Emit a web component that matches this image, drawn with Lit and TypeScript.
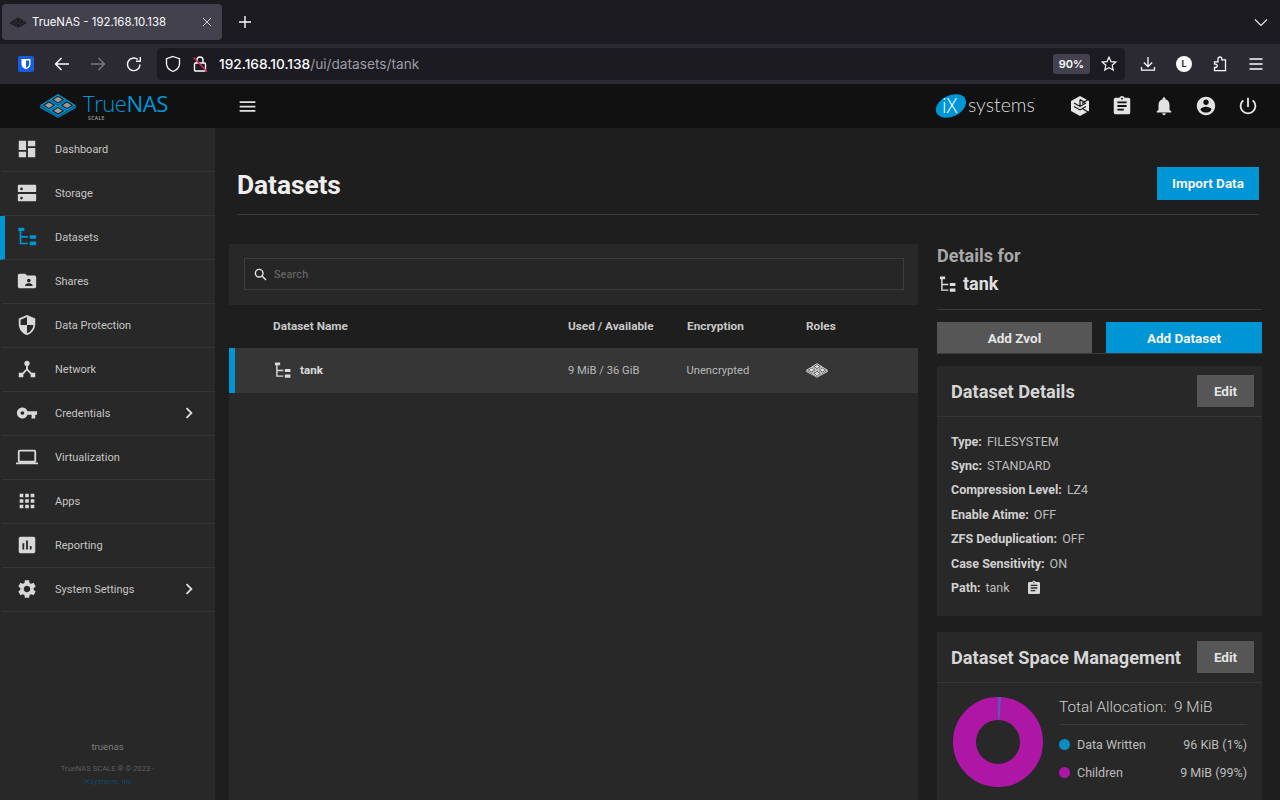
import { LitElement, css, html, svg } from "lit";
import { customElement } from "lit/decorators.js";

const icon = (d: string, size = 22) => html`<svg class="ic" width=${size} height=${size} viewBox="0 0 24 24" fill="currentColor"><path fill-rule="evenodd" d=${d}></path></svg>`;

const P = {
  dashboard: "M3 13h8V3H3v10zm0 8h8v-6H3v6zm10 0h8V11h-8v10zm0-18v6h8V3h-8z",
  storage: "M3 3h18a1 1 0 0 1 1 1v6a1 1 0 0 1-1 1H3a1 1 0 0 1-1-1V4a1 1 0 0 1 1-1zm3 3a1.5 1.5 0 1 0 0 3 1.5 1.5 0 0 0 0-3zM3 13h18a1 1 0 0 1 1 1v6a1 1 0 0 1-1 1H3a1 1 0 0 1-1-1v-6a1 1 0 0 1 1-1zm3 3a1.5 1.5 0 1 0 0 3 1.5 1.5 0 0 0 0-3z",
  shares: "M20 6h-8l-2-2H4c-1.1 0-1.99.9-1.99 2L2 18c0 1.1.9 2 2 2h16c1.1 0 2-.9 2-2V8c0-1.1-.9-2-2-2zm-6 3.5c1.1 0 2 .9 2 2s-.9 2-2 2-2-.9-2-2 .9-2 2-2zm4 8h-8v-1c0-1.33 2.67-2 4-2s4 .67 4 2v1z",
  shield: "M12 1L3 5v6c0 5.55 3.84 10.74 9 12 5.16-1.26 9-6.45 9-12V5l-9-4zm0 10.99h7c-.53 4.12-3.28 7.79-7 8.94V12H5V6.3l7-3.11v8.8z",
  network: "M17 16l-4-4V8.82C14.16 8.4 15 7.3 15 6c0-1.66-1.34-3-3-3S9 4.34 9 6c0 1.3.84 2.4 2 2.82V12l-4 4H3v5h5v-3.05l4-4.2 4 4.2V21h5v-5h-4z",
  key: "M12.65 10C11.83 7.67 9.61 6 7 6c-3.31 0-6 2.69-6 6s2.69 6 6 6c2.61 0 4.83-1.67 5.65-4H17v4h4v-4h2v-4H12.65zM7 14c-1.1 0-2-.9-2-2s.9-2 2-2 2 .9 2 2-.9 2-2 2z",
  laptop: "M20 18c1.1 0 1.99-.9 1.99-2L22 6c0-1.1-.9-2-2-2H4c-1.1 0-2 .9-2 2v10c0 1.1.9 2 2 2H0v2h24v-2h-4zM4 6h16v10H4V6z",
  apps: "M4 8h4V4H4v4zm6 12h4v-4h-4v4zm-6 0h4v-4H4v4zm0-6h4v-4H4v4zm6 0h4v-4h-4v4zm6-10v4h4V4h-4zm-6 4h4V4h-4v4zm6 6h4v-4h-4v4zm0 6h4v-4h-4v4z",
  report: "M19 3H5c-1.1 0-2 .9-2 2v14c0 1.1.9 2 2 2h14c1.1 0 2-.9 2-2V5c0-1.1-.9-2-2-2zM9 17H7v-7h2v7zm4 0h-2V7h2v10zm4 0h-2v-4h2v4z",
  gear: "M19.14 12.94c.04-.3.06-.61.06-.94 0-.32-.02-.64-.07-.94l2.03-1.58c.18-.14.23-.41.12-.61l-1.92-3.32c-.12-.22-.37-.29-.59-.22l-2.39.96c-.5-.38-1.03-.7-1.62-.94l-.36-2.54c-.04-.24-.24-.41-.48-.41h-3.84c-.24 0-.43.17-.47.41l-.36 2.54c-.59.24-1.13.57-1.62.94l-2.39-.96c-.22-.08-.47 0-.59.22L2.74 8.87c-.12.21-.08.47.12.61l2.03 1.58c-.05.3-.09.63-.09.94s.02.64.07.94l-2.03 1.58c-.18.14-.23.41-.12.61l1.92 3.32c.12.22.37.29.59.22l2.39-.96c.5.38 1.03.7 1.62.94l.36 2.54c.05.24.24.41.48.41h3.84c.24 0 .44-.17.47-.41l.36-2.54c.59-.24 1.13-.56 1.62-.94l2.39.96c.22.08.47 0 .59-.22l1.92-3.32c.12-.22.07-.47-.12-.61l-2.01-1.58zM12 15.6c-1.98 0-3.6-1.62-3.6-3.6s1.62-3.6 3.6-3.6 3.6 1.62 3.6 3.6-1.62 3.6-3.6 3.6z",
  tree: "M2.5 2h6.5v3.5H5.8V11H13v1.8H5.8V18.2H13V20H4V5.5H2.5zM15 10h7v4h-7zM15 17h7v4h-7z",
  clipboard: "M19 3h-4.18C14.4 1.84 13.3 1 12 1c-1.3 0-2.4.84-2.82 2H5c-1.1 0-2 .9-2 2v14c0 1.1.9 2 2 2h14c1.1 0 2-.9 2-2V5c0-1.1-.9-2-2-2zm-7 0c.55 0 1 .45 1 1s-.45 1-1 1-1-.45-1-1 .45-1 1-1zm2 14H7v-2h7v2zm3-4H7v-2h10v2zm0-4H7V7h10v2z",
  bell: "M12 22c1.1 0 2-.9 2-2h-4c0 1.1.89 2 2 2zm6-6v-5c0-3.07-1.64-5.64-4.5-6.32V4c0-.83-.67-1.5-1.5-1.5s-1.5.67-1.5 1.5v.68C7.63 5.36 6 7.92 6 11v5l-2 2v1h16v-1l-2-2z",
  account: "M12 2C6.48 2 2 6.48 2 12s4.48 10 10 10 10-4.48 10-10S17.52 2 12 2zm0 3c1.66 0 3 1.34 3 3s-1.34 3-3 3-3-1.34-3-3 1.34-3 3-3zm0 14.2c-2.5 0-4.71-1.28-6-3.22.03-1.99 4-3.08 6-3.08 1.99 0 5.97 1.09 6 3.08-1.29 1.94-3.5 3.22-6 3.22z",
  power: "M13 3h-2v10h2V3zm4.83 2.17l-1.42 1.42C17.99 7.86 19 9.81 19 12c0 3.87-3.13 7-7 7s-7-3.13-7-7c0-2.19 1.01-4.14 2.58-5.42L6.17 5.17C4.23 6.82 3 9.26 3 12c0 4.97 4.03 9 9 9s9-4.03 9-9c0-2.74-1.23-5.18-3.17-6.83z",
  menu: "M3 18h18v-2H3v2zm0-5h18v-2H3v2zm0-7v2h18V6H3z",
  chevron: "M8.6 16.6L13.2 12 8.6 7.4 10 6l6 6-6 6z",
};

// isometric four-tile mark used for the logo, favicon and role icon
function mark(width: number, height: number, outer: string, gap: string, inner: string, edge: string) {
  const tiles = [[18, 5.6], [9, 11.2], [27, 11.2], [18, 16.8]];
  const dia = (x: number, y: number, w: number, h: number) =>
    `${x},${y - h} ${x + w},${y} ${x},${y + h} ${x - w},${y}`;
  return html`<svg width=${width} height=${height} viewBox="0 0 36 24">
    <polygon points="0,11.5 18,22.5 36,11.5 36,14 18,24 0,14" fill=${edge}></polygon>
    ${tiles.map(([x, y]) => svg`
      <polygon points=${dia(x, y, 8.8, 5.5)} fill=${outer}></polygon>
      <polygon points=${dia(x, y, 6.2, 3.9)} fill=${gap}></polygon>
      <polygon points=${dia(x, y, 4.4, 2.8)} fill=${inner}></polygon>`)}
  </svg>`;
}

const NAV = [
  { label: "Dashboard", d: P.dashboard },
  { label: "Storage", d: P.storage },
  { label: "Datasets", d: P.tree, active: true },
  { label: "Shares", d: P.shares },
  { label: "Data Protection", d: P.shield },
  { label: "Network", d: P.network },
  { label: "Credentials", d: P.key, more: true },
  { label: "Virtualization", d: P.laptop },
  { label: "Apps", d: P.apps },
  { label: "Reporting", d: P.report },
  { label: "System Settings", d: P.gear, more: true },
];

const DETAILS: [string, string][] = [
  ["Type:", "FILESYSTEM"],
  ["Sync:", "STANDARD"],
  ["Compression Level:", "LZ4"],
  ["Enable Atime:", "OFF"],
  ["ZFS Deduplication:", "OFF"],
  ["Case Sensitivity:", "ON"],
];

@customElement("app-root")
export class AppRoot extends LitElement {
  static styles = css`
    :host {
      display: flex;
      flex-direction: column;
      width: 1280px;
      height: 800px;
      overflow: hidden;
      background: #1e1e1e;
      font-family: Roboto, "Liberation Sans", sans-serif;
      color: #d0d0d0;
    }
    svg { display: block; flex: none; }

    /* browser chrome */
    .tabbar {
      height: 44px;
      flex: none;
      display: flex;
      align-items: center;
      padding: 0 10px 0 2px;
      background: #1c1b22;
      color: #fbfbfe;
      font-family: Inter, sans-serif;
    }
    .tab {
      width: 220px;
      height: 36px;
      box-sizing: border-box;
      padding: 0 9px 0 8px;
      display: flex;
      align-items: center;
      gap: 6px;
      background: #42414d;
      border-radius: 4px;
      font-size: 11.4px;
    }
    .tab span { flex: 1; }
    .newtab { margin-left: 16px; }
    .tabbar .end { margin-left: auto; margin-right: 2px; }
    .toolbar {
      height: 40px;
      flex: none;
      box-sizing: border-box;
      padding: 4px 14px 4px 18px;
      display: flex;
      align-items: center;
      background: #2b2a33;
      color: #fbfbfe;
      font-family: Inter, sans-serif;
    }
    .bw { margin-right: 19px; }
    .nav-btn { margin-right: 18px; }
    .nav-btn.off { color: #7b7a82; }
    .nav-btn.last { margin-right: 14px; }
    .urlbar {
      width: 968px;
      height: 32px;
      box-sizing: border-box;
      flex: none;
      padding: 0 8px 0 8px;
      display: flex;
      align-items: center;
      background: #1c1b22;
      border-radius: 4px;
    }
    .lock { margin: 0 11px 0 12px; }
    .url { flex: 1; font-size: 13.7px; font-weight: 500; white-space: nowrap; }
    .url i { font-style: normal; font-weight: 400; color: #9d9ca3; }
    .zoom {
      width: 37px;
      height: 20px;
      line-height: 20px;
      text-align: center;
      background: #42414d;
      border-radius: 3px;
      font-size: 11px;
      font-weight: 600;
      margin-right: 11px;
    }
    .tools { display: flex; align-items: center; gap: 20px; margin-left: 15px; }
    .avatar {
      width: 16px;
      height: 16px;
      border-radius: 50%;
      background: #fbfbfe;
      color: #2b2a33;
      font-size: 9px;
      font-weight: 700;
      line-height: 16px;
      text-align: center;
    }

    /* app top bar */
    .topbar {
      height: 44px;
      flex: none;
      display: flex;
      align-items: center;
      background: #111;
      color: #e2e2e2;
    }
    .brand {
      width: 215px;
      box-sizing: border-box;
      padding: 0 0 0 40px;
      flex: none;
      display: flex;
      align-items: center;
      gap: 7px;
    }
    .brand-text {
      position: relative;
      color: #0095d5;
      font-family: "Open Sans", sans-serif;
      font-size: 22.2px;
      font-weight: 300;
      line-height: 24px;
      letter-spacing: -0.5px;
      transform: translateY(-2px);
    }
    .brand-text b { font-weight: 500; }
    .brand-text small {
      position: absolute;
      left: 5px;
      top: 23px;
      font-size: 5px;
      line-height: 6px;
      font-weight: 600;
      color: #aaa;
      letter-spacing: 0.4px;
    }
    .hamburger { margin-left: 22px; }
    .ix { margin-left: auto; margin-right: 32px; }
    .top-icons { display: flex; align-items: center; gap: 20px; margin-right: 21px; }

    .body { flex: 1; min-height: 0; display: flex; }

    /* sidebar */
    .sidebar {
      width: 215px;
      flex: none;
      display: flex;
      flex-direction: column;
      background: #282828;
    }
    .nav-item {
      height: 44px;
      box-sizing: border-box;
      padding: 0 15px 1px 14px;
      margin-left: 2px;
      display: flex;
      align-items: center;
      border-bottom: 1px solid #363636;
      color: #d8d8d8;
      font-size: 11px;
    }
    .nav-item .ic { margin-right: 17px; }
    .nav-item span { flex: 1; color: #c6c6c6; }
    .nav-item .ic.chev { margin: 0; color: #e0e0e0; }
    .nav-item.active {
      margin-left: 0;
      padding-left: 11px;
      border-left: 5px solid #0095d5;
      color: #0095d5;
    }
    .side-foot {
      margin-top: auto;
      padding-bottom: 12px;
      text-align: center;
      font-size: 7.6px;
      line-height: 13px;
      color: #5e5e5e;
    }
    .side-foot .host { font-size: 9.6px; color: #7c7c7c; margin-bottom: 9px; }
    .side-foot .sep { color: #0b5f85; }
    .side-foot .link { color: #0b4a66; }

    /* page */
    .main {
      flex: 1;
      min-width: 0;
      padding: 0 21px 0 22px;
    }
    .page-head {
      height: 87px;
      box-sizing: border-box;
      display: flex;
      align-items: center;
      justify-content: space-between;
      padding-top: 28px;
      border-bottom: 1px solid #3a3a3a;
    }
    .page-head h1 {
      margin: 0;
      font-size: 26.4px;
      line-height: 32px;
      font-weight: 700;
      color: #eee;
      letter-spacing: -0.1px;
    }
    .btn {
      display: flex;
      align-items: center;
      justify-content: center;
      box-sizing: border-box;
      background: #565656;
      color: #e4e4e4;
      font-size: 13.5px;
      font-weight: 700;
    }
    .btn.primary { background: #0095d5; color: #f2f2f2; }
    .import { width: 102px; height: 33px; margin-bottom: 4px; }
    .columns {
      display: grid;
      grid-template-columns: 689px 325px;
      column-gap: 19px;
      margin: 29px -3px 0 -8px;
    }

    /* dataset tree */
    .tree-panel { height: 556px; background: #282828; display: flex; flex-direction: column; }
    .search-wrap { height: 61px; box-sizing: border-box; padding: 14px 14px 15px 15px; }
    .search {
      height: 32px;
      box-sizing: border-box;
      padding-left: 9px;
      display: flex;
      align-items: center;
      gap: 7px;
      border: 1px solid #3c3c3c;
      background: #262626;
      color: #e8e8e8;
    }
    .search span { font-size: 10.8px; color: #6f6f6f; letter-spacing: 0.2px; }
    .tree-row {
      display: grid;
      grid-template-columns: 339px 119px 119px 1fr;
      align-items: center;
    }
    .tree-head {
      height: 43px;
      box-sizing: border-box;
      padding-bottom: 2px;
      background: #1e1e1e;
      font-size: 11.8px;
      font-weight: 700;
      color: #c8c8c8;
    }
    .tree-head div:first-child { padding-left: 44px; }
    .tree-item {
      height: 45px;
      box-sizing: border-box;
      padding-bottom: 1px;
      background: #363636;
      border-left: 6px solid #0095d5;
      grid-template-columns: 333px 118.5px 119.5px 1fr;
      font-size: 11.2px;
      color: #b9b9b9;
    }
    .tree-name {
      padding-left: 38px;
      display: flex;
      align-items: center;
      gap: 8px;
      font-weight: 700;
      color: #dcdcdc;
      font-size: 11.6px;
    }

    /* details column */
    .details-title {
      height: 66px;
      box-sizing: border-box;
      border-bottom: 1px solid #3a3a3a;
      font-size: 18px;
      font-weight: 700;
    }
    .details-title .for { color: #a8a8a8; line-height: 24px; }
    .details-title .name {
      display: flex;
      align-items: center;
      gap: 6px;
      color: #dedede;
      line-height: 32px;
      margin-left: 1px;
    }
    .actions {
      display: grid;
      grid-template-columns: 155px 156px;
      column-gap: 14px;
      height: 31px;
      margin-top: 12px;
      border-bottom: 1px solid #3a3a3a;
    }
    .actions .btn { height: 31px; }
    .card { background: #282828; }
    .card + .card { margin-top: 16px; }
    .actions + .card { margin-top: 12px; }
    .card-head {
      height: 51px;
      box-sizing: border-box;
      padding: 0 8px 0 14px;
      display: flex;
      align-items: center;
      justify-content: space-between;
      border-bottom: 1px solid #363636;
    }
    .card-head h3 {
      margin: 0;
      font-size: 18.2px;
      font-weight: 700;
      color: #d6d6d6;
    }
    .edit { width: 57px; height: 32px; }
    .kv { height: 199px; box-sizing: border-box; padding: 12px 14px 0; }
    .kv-row {
      height: 24.4px;
      display: flex;
      align-items: center;
      gap: 5px;
      font-size: 12.5px;
      color: #bdbdbd;
    }
    .kv-row b { font-weight: 700; color: #d0d0d0; }
    .kv-row .copy { margin-left: 11px; color: #d8d8d8; }
    .space { display: flex; padding: 14px 15px 60px 16px; }
    .space-info { flex: 1; margin-left: 16px; }
    .total {
      height: 28px;
      box-sizing: border-box;
      border-bottom: 1px solid #3a3a3a;
      font-size: 15.4px;
      font-weight: 300;
      line-height: 20px;
      color: #cfcfcf;
      white-space: pre;
    }
    .legend {
      height: 28px;
      display: flex;
      align-items: center;
      font-size: 12.5px;
      color: #bdbdbd;
    }
    .total + .legend { margin-top: 5px; }
    .dot { width: 11px; height: 11px; border-radius: 50%; margin-right: 7px; }
    .legend span:last-child { margin-left: auto; }
  `;

  render() {
    return html`
      <div class="tabbar">
        <div class="tab">
          ${mark(16, 11, "#15141a", "#42414d", "#15141a", "#15141a")}
          <span>TrueNAS - 192.168.10.138</span>
          <svg width="12" height="12" viewBox="0 0 12 12" stroke="#cfcfd4" stroke-width="1"><path d="M2 2l8 8M10 2l-8 8"></path></svg>
        </div>
        <svg class="newtab" width="14" height="14" viewBox="0 0 14 14" stroke="currentColor" stroke-width="1.4"><path d="M7 1v12M1 7h12"></path></svg>
        <svg class="end" width="14" height="14" viewBox="0 0 14 14" fill="none" stroke="#e8e8ea" stroke-width="1.2"><path d="M1 4.5l6 6 6-6"></path></svg>
      </div>

      <div class="toolbar">
        <svg class="bw" width="16" height="16" viewBox="0 0 16 16">
          <rect width="16" height="16" rx="2" fill="#175ddc"></rect>
          <path d="M3.5 3h9v5.5c0 2.4-2.4 3.8-4.5 4.8-2.1-1-4.5-2.4-4.5-4.8z" fill="#fff"></path>
          <path d="M8 4.4h3.1v4c0 1.5-1.5 2.5-3.1 3.3z" fill="#175ddc"></path>
        </svg>
        <svg class="nav-btn" width="18" height="16" viewBox="0 0 18 16" fill="none" stroke="currentColor" stroke-width="1.4"><path d="M16 8H2.5M8.5 2L2.5 8l6 6"></path></svg>
        <svg class="nav-btn off" width="18" height="16" viewBox="0 0 18 16" fill="none" stroke="currentColor" stroke-width="1.4"><path d="M2 8h13.5M9.5 2l6 6-6 6"></path></svg>
        <svg class="nav-btn last" width="18" height="16" viewBox="0 0 18 16" fill="none" stroke="currentColor" stroke-width="1.4"><path d="M15 8.5A6.3 6.3 0 1 1 12.6 3.4"></path><path d="M15.3 1v4.3H11" stroke-width="1.4"></path></svg>
        <div class="urlbar">
          <svg width="16" height="18" viewBox="0 0 16 18" fill="none" stroke="currentColor" stroke-width="1.3"><path d="M8 1.5l6.5 2.2v5c0 3.7-3 6.3-6.5 7.8-3.5-1.5-6.5-4.1-6.5-7.8v-5z"></path></svg>
          <svg class="lock" width="15" height="18" viewBox="0 0 15 18" fill="none"><rect x="1.5" y="8" width="11" height="8" rx="1" stroke="#fbfbfe" stroke-width="1.4"></rect><path d="M4 8V5a3 3 0 0 1 6 0v3" stroke="#fbfbfe" stroke-width="1.4"></path><path d="M0.5 2.5l13.5 14" stroke="#e22850" stroke-width="1.5"></path></svg>
          <div class="url">192.168.10.138<i>/ui/datasets/tank</i></div>
          <div class="zoom">90%</div>
          <svg width="16" height="16" viewBox="0 0 16 16" fill="none" stroke="currentColor" stroke-width="1.2"><path d="M8 1.2l2 4.4 4.8.5-3.6 3.2 1 4.7L8 11.6l-4.2 2.4 1-4.7L1.2 6.1 6 5.6z"></path></svg>
        </div>
        <div class="tools">
          <svg width="16" height="16" viewBox="0 0 16 16" fill="none" stroke="currentColor" stroke-width="1.3"><path d="M8 1v9.5M3.8 6.5L8 10.7l4.2-4.2M1.5 11v3.2h13V11"></path></svg>
          <div class="avatar">L</div>
          <svg width="16" height="16" viewBox="0 0 16 16" fill="none" stroke="currentColor" stroke-width="1.3"><path d="M6 3.5V2.6a1.9 1.9 0 0 1 3.8 0v.9h3.7v10.9H2.5v-3.2h1a1.7 1.7 0 0 0 0-3.4h-1V5.5H6z" transform="translate(0 .3)"></path></svg>
          <svg width="16" height="16" viewBox="0 0 16 16" fill="none" stroke="currentColor" stroke-width="1.3"><path d="M1.5 3h13M1.5 8h13M1.5 13h13"></path></svg>
        </div>
      </div>

      <div class="topbar">
        <div class="brand">
          ${mark(36, 24, "#0095d5", "#111", "#9a9a9a", "#0078ad")}
          <div class="brand-text">True<b>NAS</b><small>SCALE</small></div>
        </div>
        <div class="hamburger">${icon(P.menu, 21)}</div>
        <svg class="ix" width="101" height="28" viewBox="0 0 101 28">
          <ellipse cx="15" cy="14" rx="16" ry="10.5" transform="rotate(-26 15 14)" fill="#0095d5"></ellipse>
          <text x="6" y="21" fill="#fff" font-family="'Open Sans', sans-serif" font-size="20" font-weight="300">iX</text>
          <text x="32" y="20" fill="#dcdcdc" font-family="Lato, sans-serif" font-size="19.5" font-weight="300">systems</text>
          <text x="97" y="9" fill="#999" font-family="Roboto, sans-serif" font-size="4">™</text>
        </svg>
        <div class="top-icons">
          <svg width="22" height="22" viewBox="0 0 22 22">
            <polygon points="11,1 20,6 20,16 11,21 2,16 2,6" fill="#e6e6e6"></polygon>
            <path d="M5 8l6 3.4L17 8M5 11.5l6 3.4 6-3.4M11 4.5L16 7.5M11 4.5v7M19 4.5l-6 4M19 17l-5-3" stroke="#111" stroke-width="1.2" fill="none"></path>
          </svg>
          ${icon(P.clipboard)} ${icon(P.bell)} ${icon(P.account)} ${icon(P.power)}
        </div>
      </div>

      <div class="body">
        <nav class="sidebar">
          ${NAV.map((n) => html`
            <div class="nav-item ${n.active ? "active" : ""}">
              ${icon(n.d)}
              <span>${n.label}</span>
              ${n.more ? html`<svg class="ic chev" width="22" height="22" viewBox="0 0 24 24" fill="currentColor"><path d=${P.chevron}></path></svg>` : ""}
            </div>`)}
          <div class="side-foot">
            <div class="host">truenas</div>
            <div>TrueNAS SCALE ® © 2023 <span class="sep">-</span></div>
            <div class="link">iXsystems, Inc</div>
          </div>
        </nav>

        <main class="main">
          <div class="page-head">
            <h1>Datasets</h1>
            <div class="btn primary import">Import Data</div>
          </div>
          <div class="columns">
            <section class="tree-panel">
              <div class="search-wrap">
                <div class="search">
                  <svg width="13" height="13" viewBox="0 0 13 13" fill="none" stroke="currentColor" stroke-width="1.4"><circle cx="5.2" cy="5.2" r="3.8"></circle><path d="M8 8l4 4"></path></svg>
                  <span>Search</span>
                </div>
              </div>
              <div class="tree-row tree-head">
                <div>Dataset Name</div><div>Used / Available</div><div>Encryption</div><div>Roles</div>
              </div>
              <div class="tree-row tree-item">
                <div class="tree-name">${icon(P.tree, 19)}<span>tank</span></div>
                <div>9 MiB / 36 GiB</div>
                <div>Unencrypted</div>
                <div>${mark(22, 15, "#e2e2e2", "#363636", "#e2e2e2", "#bdbdbd")}</div>
              </div>
            </section>

            <section>
              <div class="details-title">
                <div class="for">Details for</div>
                <div class="name">${icon(P.tree, 19)}<span>tank</span></div>
              </div>
              <div class="actions">
                <div class="btn">Add Zvol</div>
                <div class="btn primary">Add Dataset</div>
              </div>
              <div class="card">
                <div class="card-head"><h3>Dataset Details</h3><div class="btn edit">Edit</div></div>
                <div class="kv">
                  ${DETAILS.map(([k, v]) => html`<div class="kv-row"><b>${k}</b><span>${v}</span></div>`)}
                  <div class="kv-row"><b>Path:</b><span>tank</span><span class="copy">${icon(P.clipboard, 16)}</span></div>
                </div>
              </div>
              <div class="card">
                <div class="card-head"><h3>Dataset Space Management</h3><div class="btn edit">Edit</div></div>
                <div class="space">
                  <svg width="90" height="90" viewBox="0 0 90 90">
                    <circle cx="45" cy="45" r="33.5" fill="none" stroke="#ae17a6" stroke-width="23"></circle>
                    <path d="M45 0L48 0.1L46.5 22.5L45 22.5z" fill="#5a58bd"></path>
                  </svg>
                  <div class="space-info">
                    <div class="total">Total Allocation:  9 MiB</div>
                    <div class="legend"><span class="dot" style="background:#0a8dc3"></span><span>Data Written</span><span>96 KiB (1%)</span></div>
                    <div class="legend"><span class="dot" style="background:#ae17a6"></span><span>Children</span><span>9 MiB (99%)</span></div>
                  </div>
                </div>
              </div>
            </section>
          </div>
        </main>
      </div>
    `;
  }
}
